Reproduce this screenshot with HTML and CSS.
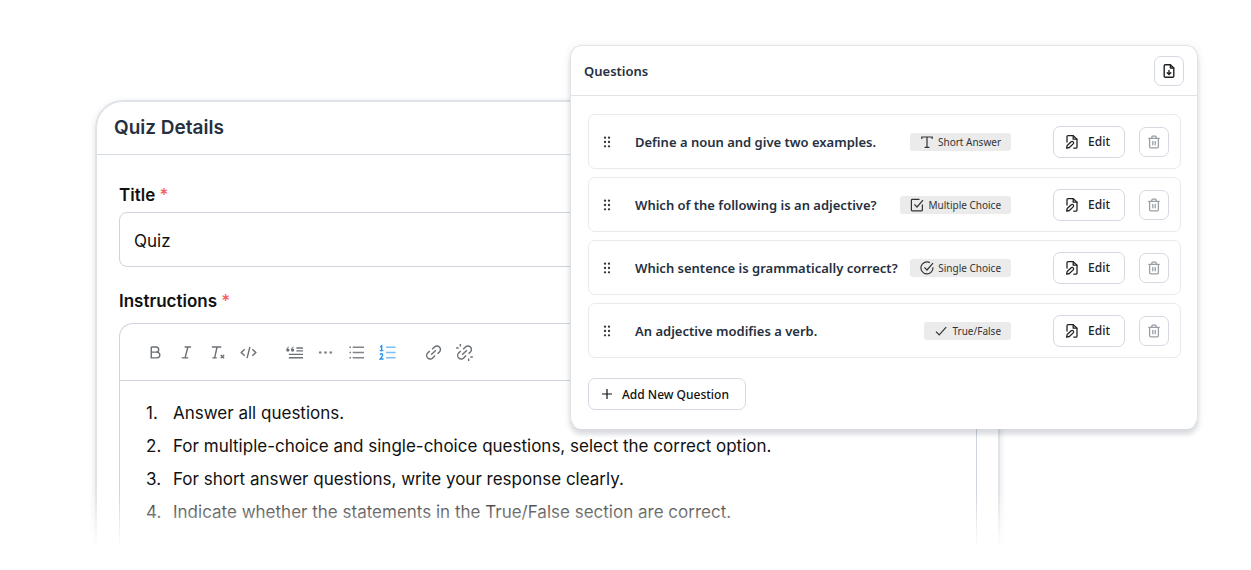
FILE: index.html
```html
<!DOCTYPE html>
<html lang="en">
<head>
<meta charset="utf-8">
<title>Quiz Details</title>
<link rel="stylesheet" href="styles.css">
</head>
<body>
<svg class="sprite" aria-hidden="true">
  <symbol id="grip" viewBox="0 0 8 12"><g fill="currentColor"><circle cx="2" cy="1.7" r="1.15"/><circle cx="6" cy="1.7" r="1.15"/><circle cx="2" cy="6" r="1.15"/><circle cx="6" cy="6" r="1.15"/><circle cx="2" cy="10.3" r="1.15"/><circle cx="6" cy="10.3" r="1.15"/></g></symbol>
  <symbol id="edit" viewBox="0 0 14 16"><g fill="none" stroke="currentColor" stroke-width="1.3" stroke-linejoin="round" stroke-linecap="round"><path d="M2 8V2.6Q2 1.6 3 1.6H8.2L12 5.2V13Q12 14.2 10.8 14.2H8.8"/><path d="M8.2 1.8V5.2H11.8"/><path d="M1.6 14.2L2.2 11.4L6.2 7.7Q7.3 6.9 8.3 7.9Q9.1 8.9 8.2 9.9L4.4 13.5Z"/></g></symbol>
  <symbol id="trash" viewBox="0 0 14 16"><g fill="none" stroke="currentColor" stroke-width="1.3" stroke-linejoin="round" stroke-linecap="round"><path d="M1.8 4.4H12.2M4.5 4.2L5.2 2.2H8.8L9.5 4.2M2.6 4.6V12.6Q2.6 13.8 3.8 13.8H10.2Q11.4 13.8 11.4 12.6V4.6M5.8 7.4V10.8M8.2 7.4V10.8"/></g></symbol>
</svg>
<main class="stage">
  <section class="quiz" aria-labelledby="quiz-heading">
    <h1 class="quiz-heading" id="quiz-heading">Quiz Details</h1>
    <form class="quiz-form">
      <div class="field">
        <label class="field-label" for="title">Title <span class="required">*</span></label>
        <input class="text-input" id="title" type="text" value="Quiz">
      </div>
      <div class="field">
        <span class="field-label" id="instructions-label">Instructions <span class="required">*</span></span>
        <div class="editor">
          <div class="toolbar" role="toolbar" aria-label="Formatting">
            <div class="tool-group">
              <button type="button" class="tool" aria-label="Bold"><svg viewBox="0 0 18 18"><path d="M4.5 3.2H9.5Q12.4 3.4 12.4 6Q12.4 8.6 9.5 8.6H4.5M9.8 8.6Q13.6 8.9 13.6 11.7Q13.6 14.7 10 14.7H4.5V3.2"/></svg></button>
              <button type="button" class="tool" aria-label="Italic"><svg viewBox="0 0 18 18"><path d="M7 3.2H13.8M10.5 3.2L7.5 14.7M4 14.7H10.8"/></svg></button>
              <button type="button" class="tool" aria-label="Clear formatting"><svg viewBox="0 0 18 18"><path d="M3 3.2H13M8.5 3.2L6 14.7M3.5 14.7H8.2M12.4 11.6L16 15.2M16 11.6L12.4 15.2"/></svg></button>
              <button type="button" class="tool" aria-label="Code"><svg viewBox="0 0 18 18"><path d="M5 5.5L1.3 9L5 12.5M13 5.5L16.7 9L13 12.5M10.5 3L7.5 15"/></svg></button>
            </div>
            <div class="tool-group">
              <button type="button" class="tool" aria-label="Quote"><svg viewBox="0 0 18 18"><path d="M11 4.3H18M11 7.3H18M3 11H18M3 14.6H18"/><g fill="currentColor" stroke="none"><circle cx="2" cy="6.4" r="1.7"/><circle cx="7" cy="6.4" r="1.7"/></g><path d="M.9 6Q.9 3.6 3 3.1M5.9 6Q5.9 3.6 8 3.1" stroke-width="1"/></svg></button>
              <button type="button" class="tool" aria-label="More"><svg viewBox="0 0 18 18"><g fill="currentColor" stroke="none" opacity=".85"><circle cx="3.4" cy="9" r="1.4"/><circle cx="9" cy="9" r="1.4"/><circle cx="14.6" cy="9" r="1.4"/></g></svg></button>
              <button type="button" class="tool" aria-label="Bulleted list"><svg viewBox="0 0 18 18"><path d="M5 3.5H17M5 9H17M5 14.5H17M1.5 3.5H3.2M1.5 9H3.2M1.5 14.5H3.2" opacity=".85"/></svg></button>
              <button type="button" class="tool tool-active" aria-label="Numbered list" aria-pressed="true"><svg viewBox="0 0 18 18"><path d="M1.2 3L2.8 2V7M.8 7H4.6M1 11.4Q2.2 9.8 3.6 10.8Q4.6 12 1.3 15.8H4.8"/><path d="M7.5 3.5H17.5M7.5 9H17.5M7.5 14.5H17.5" opacity=".6"/></svg></button>
            </div>
            <div class="tool-group">
              <button type="button" class="tool" aria-label="Insert link"><svg viewBox="0 0 18 18"><g id="chain"><path d="M6.5 11.5L11.5 6.5M7.6 5.6L10 3.2A3.7 3.7 0 0 1 15.3 8.4L13.3 10.4M10.6 12.2L8.2 14.8A3.7 3.7 0 0 1 2.8 9.6L5 7.4"/></g></svg></button>
              <button type="button" class="tool" aria-label="Remove link"><svg viewBox="0 0 18 18"><use href="#chain"/><path d="M4.6 0V2.6M.2 4.2H2.8M13.4 15.4V18M15.2 13.8H17.8"/></svg></button>
            </div>
          </div>
          <div class="editor-body" contenteditable="true" role="textbox" aria-multiline="true" aria-labelledby="instructions-label">
            <ol class="instructions">
              <li>Answer all questions.</li>
              <li>For multiple-choice and single-choice questions, select the correct option.</li>
              <li>For short answer questions, write your response clearly.</li>
              <li>Indicate whether the statements in the True/False section are correct.</li>
            </ol>
          </div>
        </div>
      </div>
    </form>
  </section>

  <section class="questions" aria-labelledby="questions-heading">
    <header class="questions-header">
      <h2 class="questions-heading" id="questions-heading">Questions</h2>
      <button type="button" class="btn btn-square" aria-label="Import questions"><svg class="icon" viewBox="0 0 14 16"><g fill="none" stroke="currentColor" stroke-width="1.4" stroke-linejoin="round" stroke-linecap="round"><path d="M3.2 1.8H8.4L11.8 5V13Q11.8 14.2 10.6 14.2H3.2Q2.2 14.2 2.2 13V3Q2.2 1.8 3.2 1.8Z"/><path d="M8.4 2V5H11.6M7 7.4V11.4M5.2 9.8L7 11.6L8.8 9.8"/></g></svg></button>
    </header>
    <div class="questions-body">
      <ul class="question-list">
        <li class="question">
          <svg class="grip"><use href="#grip"/></svg>
          <span class="question-text">Define a noun and give two examples.</span>
          <span class="badge"><svg class="badge-icon" viewBox="0 0 14 14"><path d="M1.8 4V2H12.2V4M7 2V12.4M4.6 12.4H9.4"/></svg>Short Answer</span>
          <button type="button" class="btn"><svg class="icon"><use href="#edit"/></svg>Edit</button>
          <button type="button" class="btn btn-square btn-muted" aria-label="Delete"><svg class="icon"><use href="#trash"/></svg></button>
        </li>
        <li class="question">
          <svg class="grip"><use href="#grip"/></svg>
          <span class="question-text">Which of the following is an adjective?</span>
          <span class="badge"><svg class="badge-icon" viewBox="0 0 14 14"><path d="M12.4 6.5V12Q12.4 12.8 11.6 12.8H2.2Q1.4 12.8 1.4 12V2.2Q1.4 1.4 2.2 1.4H9.5M4.4 6.4L7 9L13 2.2"/></svg>Multiple Choice</span>
          <button type="button" class="btn"><svg class="icon"><use href="#edit"/></svg>Edit</button>
          <button type="button" class="btn btn-square btn-muted" aria-label="Delete"><svg class="icon"><use href="#trash"/></svg></button>
        </li>
        <li class="question">
          <svg class="grip"><use href="#grip"/></svg>
          <span class="question-text">Which sentence is grammatically correct?</span>
          <span class="badge"><svg class="badge-icon" viewBox="0 0 14 14"><path d="M12.9 6.2A6 6 0 1 1 9.8 1.6M4.4 6.4L7 9L13 2.2"/></svg>Single Choice</span>
          <button type="button" class="btn"><svg class="icon"><use href="#edit"/></svg>Edit</button>
          <button type="button" class="btn btn-square btn-muted" aria-label="Delete"><svg class="icon"><use href="#trash"/></svg></button>
        </li>
        <li class="question">
          <svg class="grip"><use href="#grip"/></svg>
          <span class="question-text">An adjective modifies a verb.</span>
          <span class="badge"><svg class="badge-icon" viewBox="0 0 14 14"><path d="M2 7.6L5.2 10.8L12.2 3.2"/></svg>True/False</span>
          <button type="button" class="btn"><svg class="icon"><use href="#edit"/></svg>Edit</button>
          <button type="button" class="btn btn-square btn-muted" aria-label="Delete"><svg class="icon"><use href="#trash"/></svg></button>
        </li>
      </ul>
      <button type="button" class="btn btn-add"><svg class="plus" viewBox="0 0 10 10"><path d="M5 0V10M0 5H10"/></svg>Add New Question</button>
    </div>
  </section>
</main>
</body>
</html>
```

FILE: styles.css
```css
* { box-sizing: border-box; }

body {
  margin: 0;
  background: #fff;
  color: #111;
  font-family: Inter, "Liberation Sans", sans-serif;
}

button, input { font: inherit; color: inherit; }
h1, h2, ul, ol { margin: 0; padding: 0; }
.sprite { position: absolute; width: 0; height: 0; }

/* The two cards share grid cells so that the second overlaps the first. */
.stage {
  display: grid;
  grid-template-columns: 475fr 430fr 198fr;
  grid-template-rows: auto;
  align-items: start;
  padding: 45px 53px 14px 95px;
}

.quiz {
  position: relative;
  grid-area: 1 / 1 / 2 / 3;
  margin-top: 55px;
  border: 2px solid #dfe3e8;
  border-radius: 28px 28px 0 0;
  box-shadow: 0 2px 6px rgba(30, 45, 65, .14);
}

/* Fades the foot of the card, shadow included, into the page. */
.quiz::after {
  content: "";
  position: absolute;
  inset: auto -14px -14px;
  height: 78px;
  background: linear-gradient(rgba(255, 255, 255, 0), #fff 75%);
  pointer-events: none;
}

.quiz-heading {
  padding: 13px 17px 13px;
  border-bottom: 1px solid #d5dbe2;
  font-size: 19px;
  line-height: 26px;
  font-weight: 600;
  color: #253040;
}

.quiz-form {
  display: grid;
  gap: 22px;
  padding: 28px 21px 0 22px;
}

.field { display: grid; gap: 5px; }

.field-label {
  font-size: 17px;
  line-height: 24px;
  font-weight: 600;
}

.required { color: #f95b5b; font-weight: 500; }

.text-input {
  width: 100%;
  height: 55px;
  padding: 2px 14px 0;
  border: 1px solid #ced4dc;
  border-radius: 8px;
  background: #fff;
  font-size: 17px;
}

.editor {
  margin-top: 5px;
  border: 1px solid #ced4dc;
  border-bottom: 0;
  border-radius: 14px 14px 0 0;
}

.toolbar {
  display: flex;
  gap: 15px;
  padding: 12px 20px;
  border-bottom: 1px solid #ced4dc;
}

.tool-group { display: flex; }

.tool {
  display: grid;
  place-items: center;
  width: 31px;
  height: 32px;
  padding: 0;
  border: 0;
  background: none;
  color: #6b7075;
}

.tool svg {
  width: 17px;
  height: 17px;
  overflow: visible;
  fill: none;
  stroke: currentColor;
  stroke-width: 1.5;
}

.tool-active { color: #2492ee; }

.editor-body { padding: 16px 26px 25px; outline: 0; }

.instructions {
  counter-reset: item;
  font-size: 17px;
  line-height: 33px;
  list-style: none;
}

.instructions li {
  display: flex;
  counter-increment: item;
}

.instructions li::before {
  content: counter(item) ".";
  flex: none;
  width: 27px;
}

.questions {
  position: relative;
  grid-area: 1 / 2 / 2 / 4;
  border: 1px solid #e0e4e8;
  border-bottom-color: #fff;
  border-radius: 12px;
  background: #fff;
  box-shadow: 0 6px 4px rgba(30, 45, 65, .12), 0 1px 8px rgba(30, 45, 65, .1);
  font-family: "Noto Sans", sans-serif;
  color: #253040;
}

.questions-header {
  display: flex;
  align-items: center;
  justify-content: space-between;
  padding: 10px 13px 9px;
  border-bottom: 1px solid #e0e4e8;
}

.questions-heading {
  font-size: 13px;
  line-height: 20px;
  font-weight: 600;
}

.questions-body { padding: 18px 16px 18px 17px; }

.question-list {
  display: grid;
  gap: 8px;
  margin-bottom: 20px;
  list-style: none;
}

.question {
  display: flex;
  align-items: center;
  height: 55px;
  padding: 0 11px 0 14px;
  border: 1px solid #e8eaec;
  border-radius: 7px;
}

.grip {
  width: 8px;
  height: 12px;
  margin-right: 24px;
  color: #333;
}

.question-text {
  flex: 1;
  font-size: 13px;
  line-height: 20px;
  font-weight: 600;
  white-space: nowrap;
}

.badge {
  display: flex;
  align-items: center;
  gap: 4px;
  height: 18px;
  margin-right: 42px;
  padding: 0 10px;
  border-radius: 3px;
  background: #ebebeb;
  color: #333;
  font-size: 10px;
  font-weight: 400;
  white-space: nowrap;
}

.badge-icon {
  width: 14px;
  height: 14px;
  fill: none;
  stroke: currentColor;
  stroke-width: 1.2;
}

.btn {
  display: flex;
  align-items: center;
  justify-content: center;
  gap: 9px;
  height: 32px;
  padding: 0 14px 0 11px;
  border: 1px solid #d5dae2;
  border-radius: 7px;
  background: #fff;
  color: #1f2226;
  font-size: 12px;
  font-weight: 500;
  white-space: nowrap;
}

.btn-square {
  width: 30px;
  height: 30px;
  padding: 0;
}

.btn + .btn-square { margin-left: 14px; }
.btn-muted { color: #9a9fa5; }
.icon { width: 14px; height: 16px; }

.btn-add {
  gap: 10px;
  padding: 0 16px 0 13px;
  color: #111;
}

.plus {
  width: 10px;
  height: 10px;
  fill: none;
  stroke: currentColor;
  stroke-width: 1.2;
}
```
